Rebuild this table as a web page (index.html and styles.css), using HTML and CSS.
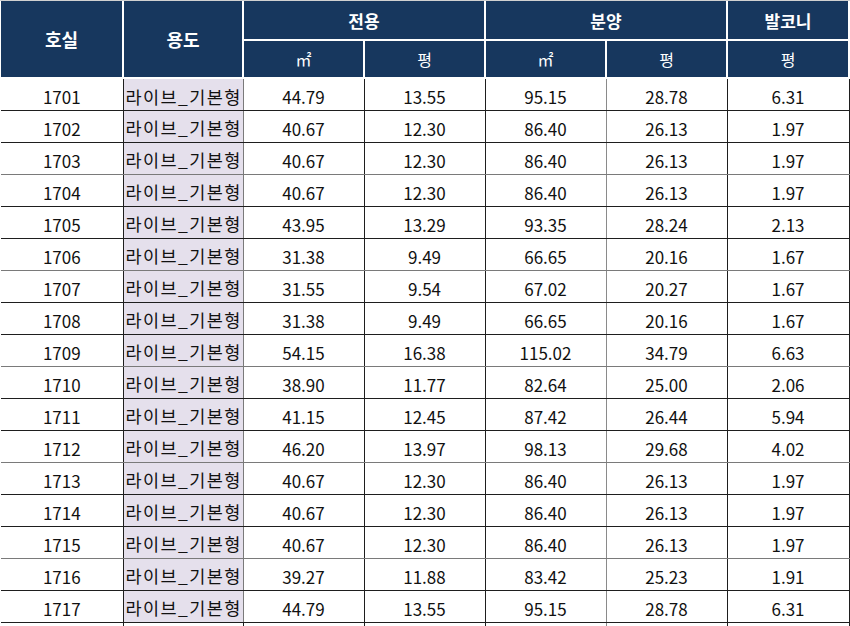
FILE: index.html
```html
<!DOCTYPE html>
<html lang="ko">
<head>
<meta charset="utf-8">
<link rel="stylesheet" href="styles.css">
</head>
<body>
<table class="sheet">
  <colgroup>
    <col class="c1"><col class="c2"><col class="c3"><col class="c4"><col class="c5"><col class="c6"><col class="c7">
  </colgroup>
  <thead>
    <tr class="h1">
      <th rowspan="2" class="big">호실</th>
      <th rowspan="2" class="big">용도</th>
      <th colspan="2">전용</th>
      <th colspan="2">분양</th>
      <th>발코니</th>
    </tr>
    <tr class="h2">
      <th class="unit">㎡</th>
      <th class="unit">평</th>
      <th class="unit">㎡</th>
      <th class="unit">평</th>
      <th class="unit">평</th>
    </tr>
  </thead>
  <tbody>
    <tr><td>1701</td><td class="use">라이브_기본형</td><td>44.79</td><td>13.55</td><td>95.15</td><td>28.78</td><td>6.31</td></tr>
    <tr><td>1702</td><td class="use">라이브_기본형</td><td>40.67</td><td>12.30</td><td>86.40</td><td>26.13</td><td>1.97</td></tr>
    <tr><td>1703</td><td class="use">라이브_기본형</td><td>40.67</td><td>12.30</td><td>86.40</td><td>26.13</td><td>1.97</td></tr>
    <tr><td>1704</td><td class="use">라이브_기본형</td><td>40.67</td><td>12.30</td><td>86.40</td><td>26.13</td><td>1.97</td></tr>
    <tr><td>1705</td><td class="use">라이브_기본형</td><td>43.95</td><td>13.29</td><td>93.35</td><td>28.24</td><td>2.13</td></tr>
    <tr><td>1706</td><td class="use">라이브_기본형</td><td>31.38</td><td>9.49</td><td>66.65</td><td>20.16</td><td>1.67</td></tr>
    <tr><td>1707</td><td class="use">라이브_기본형</td><td>31.55</td><td>9.54</td><td>67.02</td><td>20.27</td><td>1.67</td></tr>
    <tr><td>1708</td><td class="use">라이브_기본형</td><td>31.38</td><td>9.49</td><td>66.65</td><td>20.16</td><td>1.67</td></tr>
    <tr><td>1709</td><td class="use">라이브_기본형</td><td>54.15</td><td>16.38</td><td>115.02</td><td>34.79</td><td>6.63</td></tr>
    <tr><td>1710</td><td class="use">라이브_기본형</td><td>38.90</td><td>11.77</td><td>82.64</td><td>25.00</td><td>2.06</td></tr>
    <tr><td>1711</td><td class="use">라이브_기본형</td><td>41.15</td><td>12.45</td><td>87.42</td><td>26.44</td><td>5.94</td></tr>
    <tr><td>1712</td><td class="use">라이브_기본형</td><td>46.20</td><td>13.97</td><td>98.13</td><td>29.68</td><td>4.02</td></tr>
    <tr><td>1713</td><td class="use">라이브_기본형</td><td>40.67</td><td>12.30</td><td>86.40</td><td>26.13</td><td>1.97</td></tr>
    <tr><td>1714</td><td class="use">라이브_기본형</td><td>40.67</td><td>12.30</td><td>86.40</td><td>26.13</td><td>1.97</td></tr>
    <tr><td>1715</td><td class="use">라이브_기본형</td><td>40.67</td><td>12.30</td><td>86.40</td><td>26.13</td><td>1.97</td></tr>
    <tr><td>1716</td><td class="use">라이브_기본형</td><td>39.27</td><td>11.88</td><td>83.42</td><td>25.23</td><td>1.91</td></tr>
    <tr><td>1717</td><td class="use">라이브_기본형</td><td>44.79</td><td>13.55</td><td>95.15</td><td>28.78</td><td>6.31</td></tr>
    <tr class="tail"><td></td><td></td><td></td><td></td><td></td><td></td><td></td></tr>
  </tbody>
</table>
</body>
</html>
```
FILE: styles.css
```css
html, body {
  margin: 0;
  padding: 0;
  background: #ffffff;
  overflow: hidden;
}

body {
  font-family: "Noto Sans CJK KR", "Noto Sans", sans-serif;
  color: #111111;
  padding: 0 0 0 1px;
  border-top: 1px solid #d0d0d0;
}

.sheet {
  border-collapse: collapse;
  table-layout: fixed;
  width: 848px;
}

.c1 { width: 122px; }
.c2 { width: 120px; }
.c3 { width: 121px; }
.c4 { width: 121px; }
.c5 { width: 121px; }
.c6 { width: 121px; }
.c7 { width: 122px; }

th {
  background: #17375e;
  color: #ffffff;
  border: 2px solid #ffffff;
  border-top: none;
  padding: 0;
  font-weight: 700;
  font-size: 17px;
  line-height: 1;
}

th:first-child { border-left: none; }

.h1 th { height: 38px; }
.h1 th.big { font-size: 18px; }
.h2 th { height: 36px; }

th.unit {
  font-weight: 400;
  font-size: 16px;
}

td {
  height: 32px;
  padding: 4px 0 0 0;
  box-sizing: border-box;
  border: 1px solid #1e1e1e;
  text-align: center;
  font-size: 17px;
  line-height: 1;
  white-space: nowrap;
  overflow: hidden;
}

td:first-child { border-left: none; }

tbody tr:nth-child(3n) td { border-bottom-color: #7a7a7a; }

td.use {
  background: #e5e0ec;
  text-align: left;
  padding-left: 2px;
  font-size: 17.5px;
  letter-spacing: 1.4px;
  border-left-color: #7a7a7a;
  border-right-color: #7a7a7a;
}

td:nth-child(5) { border-right-color: #8a8a8a; }

.tail td { border-bottom: none; }
.tail td:nth-child(2) { border-left-color: #1e1e1e; border-right: none; }
```
